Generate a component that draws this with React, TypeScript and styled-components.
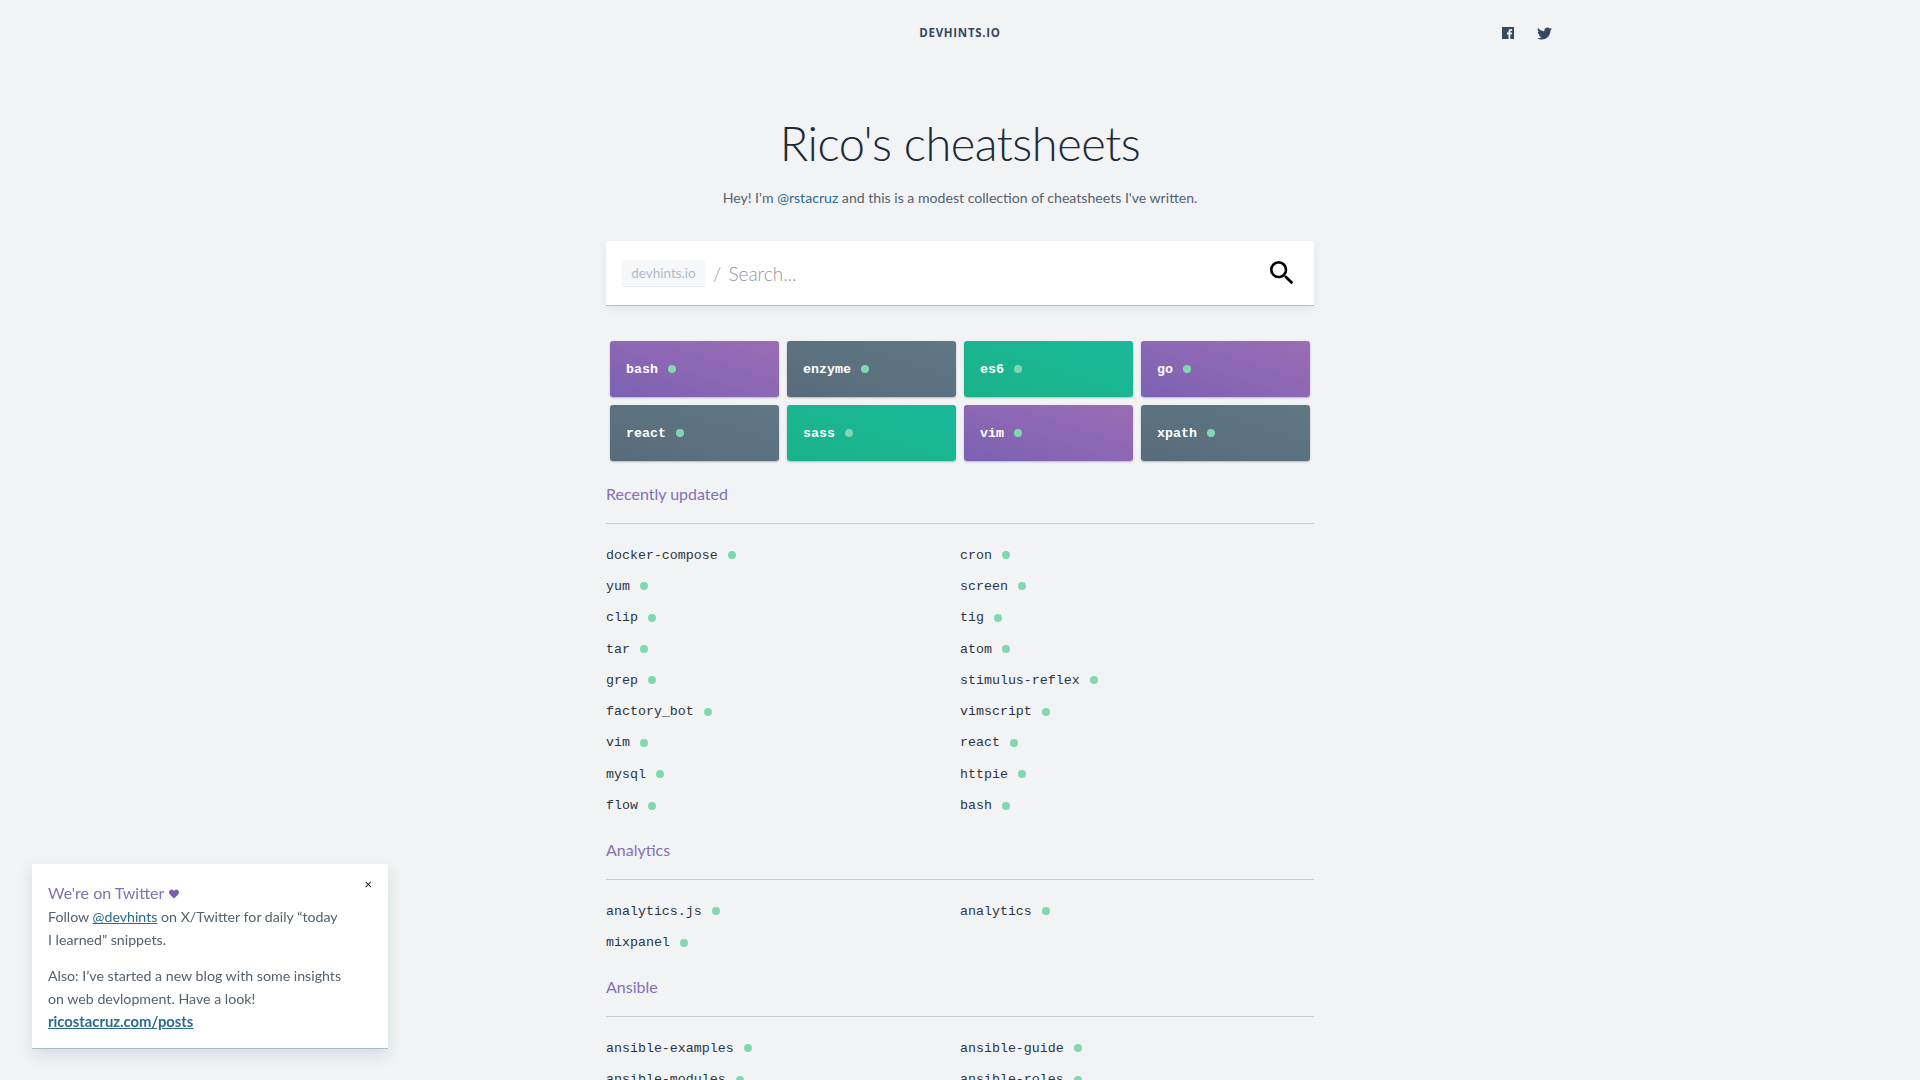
import styled, { createGlobalStyle } from "styled-components";
import { FaTwitter, FaHeart } from "react-icons/fa";
import { MdSearch } from "react-icons/md";

const GlobalStyle = createGlobalStyle`
  html, body {
    margin: 0;
    height: 100%;
    overflow: hidden;
    background: #f1f3f5;
  }
  body {
    font-family: Lato, "Open Sans", "Liberation Sans", sans-serif;
    color: #4a5a68;
  }
`;

const Page = styled.div`
  display: flex;
  flex-direction: column;
  align-items: center;
`;

const TopNav = styled.header`
  width: 1184px;
  height: 66px;
  display: grid;
  grid-template-columns: 1fr auto 1fr;
  align-items: center;
`;

const Brand = styled.div`
  grid-column: 2;
  margin-top: -1px;
  font-family: "Open Sans", sans-serif;
  font-size: 11.5px;
  font-weight: 700;
  letter-spacing: 0.7px;
  color: #34495e;
  text-transform: uppercase;
`;

const Socials = styled.div`
  display: flex;
  justify-content: flex-end;
  align-items: center;
  gap: 23px;
  color: #34495e;
  font-size: 15px;
`;

const Hero = styled.div`
  width: 708px;
  padding-top: 44px;
  text-align: center;
`;

const Title = styled.h1`
  margin: 0;
  font-size: 47px;
  font-weight: 300;
  letter-spacing: -0.5px;
  line-height: 66px;
  color: #1e2a36;
`;

const Intro = styled.p`
  margin: 11px 0 0;
  font-size: 14.1px;
  line-height: 22px;
  color: #55616d;

  a {
    color: #2a6b8f;
    text-decoration: none;
  }
`;

const SearchBox = styled.div`
  width: 708px;
  height: 65px;
  box-sizing: border-box;
  margin-top: 32px;
  padding: 0 16px 0 16px;
  display: flex;
  align-items: center;
  background: #fff;
  border-bottom: 1px solid #b8bec8;
  box-shadow: 0 4px 8px rgba(80, 100, 120, 0.08);
`;

const Chip = styled.span`
  width: 83px;
  height: 26px;
  box-sizing: border-box;
  display: flex;
  align-items: center;
  justify-content: center;
  font-size: 13.5px;
  color: #b4bac4;
  background: #f6f7f9;
  border-radius: 3px;
  box-shadow: 0 1px 1px rgba(50, 70, 90, 0.12);
`;

const Placeholder = styled.span`
  margin-left: 8px;
  flex: 1;
  font-size: 19px;
  font-weight: 300;
  color: #8f959f;
  word-spacing: 2px;
`;

const SearchIcon = styled(MdSearch)`
  font-size: 32px;
  color: #000;
`;

const TopGrid = styled.div`
  width: 700px;
  margin-top: 35px;
  margin-bottom: 4px;
  display: grid;
  grid-template-columns: repeat(4, 169px);
  grid-auto-rows: 56px;
  column-gap: 8px;
  row-gap: 8px;
`;

const tones = {
  purple: "linear-gradient(to top right, #7b62b2, #9c6cb6)",
  grey: "linear-gradient(to top right, #596b7a, #607784)",
  green: "linear-gradient(to top right, #1ab288, #1bb99a)",
};

const TopCard = styled.a<{ $tone: keyof typeof tones }>`
  display: flex;
  align-items: center;
  padding-left: 16px;
  border-radius: 3px;
  background: ${({ $tone }) => tones[$tone]};
  box-shadow: 0 1px 2px rgba(60, 70, 100, 0.35);
  color: #fff;
  font-family: "Liberation Mono", monospace;
  font-size: 13.3px;
  font-weight: 700;
`;

const Dot = styled.i`
  width: 8px;
  height: 8px;
  margin-left: 10px;
  border-radius: 50%;
  background: #7fd8b0;
`;

const Section = styled.section`
  width: 708px;
  margin-top: 14.5px;
`;

const Heading = styled.h2`
  margin: 0;
  height: 43px;
  font-size: 16px;
  font-weight: 400;
  line-height: 27px;
  color: #8470b4;
  border-bottom: 1px solid #c4c8d2;
  margin-bottom: 16px;
`;

const List = styled.div`
  display: grid;
  grid-template-columns: 354px 354px;
  grid-auto-rows: 31.3px;
`;

const Item = styled.a`
  display: flex;
  align-items: center;
  font-family: "Liberation Mono", monospace;
  font-size: 13.3px;
  color: #2c3640;
`;

const Popup = styled.aside`
  position: fixed;
  left: 32px;
  top: 864px;
  width: 356px;
  height: 185px;
  box-sizing: border-box;
  padding: 18px 16px;
  background: #fff;
  border-bottom: 1px solid #a8bcc6;
  box-shadow: 0 6px 14px rgba(90, 130, 150, 0.18);
  font-size: 14.2px;
  line-height: 22.4px;
  color: #55616d;
`;

const Close = styled.span`
  position: absolute;
  right: 16px;
  top: 9px;
  font-size: 13px;
  line-height: 22px;
  color: #111;
`;

const PopupTitle = styled.div`
  margin-bottom: 2px;
  font-size: 16px;
  color: #8470b4;
`;

const PopupText = styled.p`
  margin: 0 0 14px;

  a {
    color: #2a6b8f;
    text-decoration: underline;
  }
  b {
    font-size: 14.8px;
    font-weight: 700;
  }
`;

const Heart = styled(FaHeart)`
  font-size: 10px;
  margin-left: 1px;
  color: #7a5fb0;
`;

const topItems: { name: string; tone: keyof typeof tones }[] = [
  { name: "bash", tone: "purple" },
  { name: "enzyme", tone: "grey" },
  { name: "es6", tone: "green" },
  { name: "go", tone: "purple" },
  { name: "react", tone: "grey" },
  { name: "sass", tone: "green" },
  { name: "vim", tone: "purple" },
  { name: "xpath", tone: "grey" },
];

const sections = [
  {
    title: "Recently updated",
    items: [
      "docker-compose", "cron", "yum", "screen", "clip", "tig", "tar", "atom", "grep",
      "stimulus-reflex", "factory_bot", "vimscript", "vim", "react", "mysql", "httpie",
      "flow", "bash",
    ],
  },
  { title: "Analytics", items: ["analytics.js", "analytics", "mixpanel"] },
  {
    title: "Ansible",
    items: ["ansible-examples", "ansible-guide", "ansible-modules", "ansible-roles"],
  },
];

function FacebookIcon() {
  return (
    <svg width="12" height="12" viewBox="0 0 12 12" fill="currentColor">
      <path d="M0 0h12v12H8.3V7.4h1.5l.25-1.8H8.3V4.5c0-.5.15-.85.9-.85h.9V2a11 11 0 0 0-1.3-.07c-1.35 0-2.3.82-2.3 2.33V5.6H4.9v1.8h1.6V12H0z" />
    </svg>
  );
}

export default function App() {
  return (
    <>
      <GlobalStyle />
      <Page>
        <TopNav>
          <Brand>devhints.io</Brand>
          <Socials>
            <FacebookIcon />
            <FaTwitter />
          </Socials>
        </TopNav>
        <Hero>
          <Title>Rico's cheatsheets</Title>
          <Intro>
            Hey! I'm <a href="#">@rstacruz</a> and this is a modest collection of cheatsheets
            I've written.
          </Intro>
        </Hero>
        <SearchBox>
          <Chip>devhints.io</Chip>
          <Placeholder>/ Search...</Placeholder>
          <SearchIcon />
        </SearchBox>
        <TopGrid>
          {topItems.map((t) => (
            <TopCard key={t.name} $tone={t.tone}>
              {t.name}
              <Dot />
            </TopCard>
          ))}
        </TopGrid>
        {sections.map((s) => (
          <Section key={s.title}>
            <Heading>{s.title}</Heading>
            <List>
              {s.items.map((name) => (
                <Item key={name}>
                  {name}
                  <Dot />
                </Item>
              ))}
            </List>
          </Section>
        ))}
      </Page>
      <Popup>
        <Close>×</Close>
        <PopupTitle>
          We're on Twitter <Heart />
        </PopupTitle>
        <PopupText>
          Follow <a href="#">@devhints</a> on X/Twitter for daily “today
          <br />I learned” snippets.
        </PopupText>
        <PopupText>
          Also: I’ve started a new blog with some insights
          <br />
          on web devlopment. Have a look!
          <br />
          <a href="#">
            <b>ricostacruz.com/posts</b>
          </a>
        </PopupText>
      </Popup>
    </>
  );
}
